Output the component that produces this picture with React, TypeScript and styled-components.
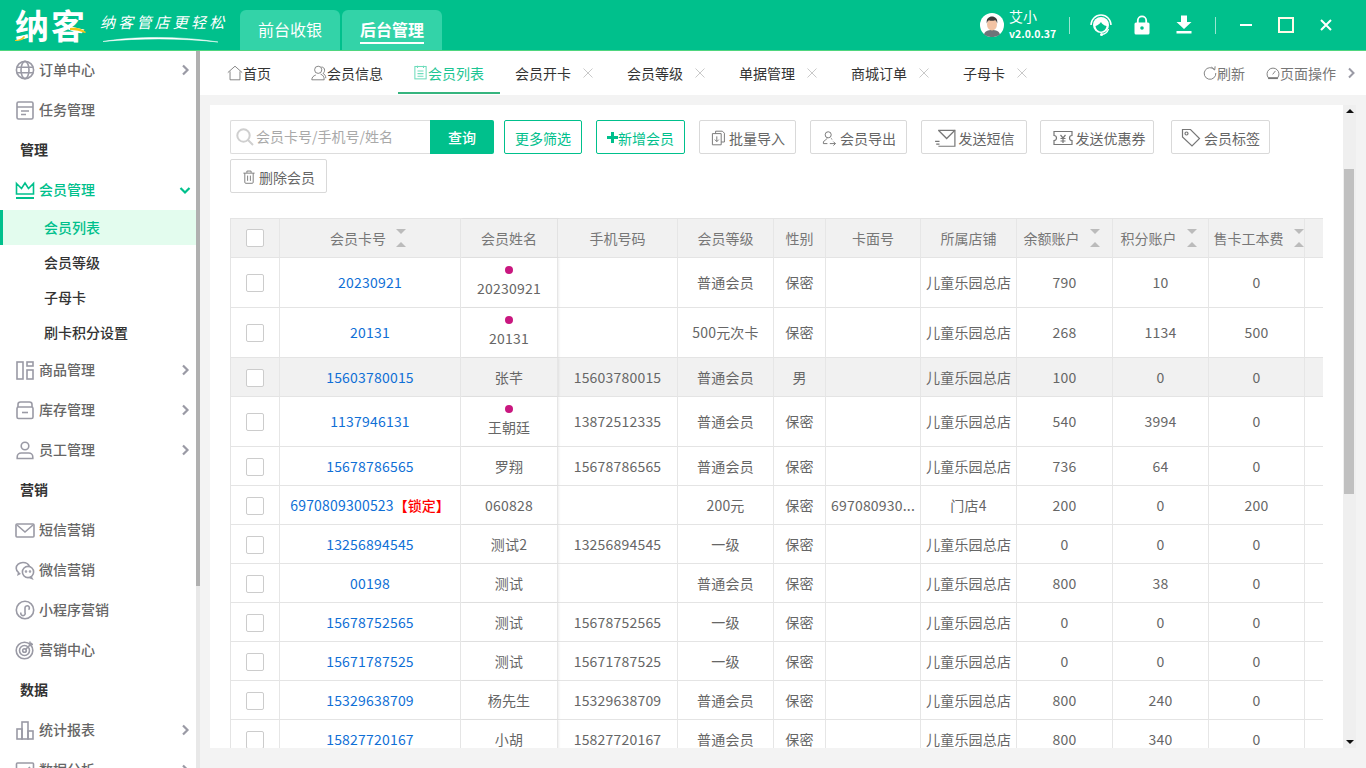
import React from "react";
import styled, { createGlobalStyle } from "styled-components";

const Global = createGlobalStyle`
  html, body { margin: 0; padding: 0; height: 100%; overflow: hidden; }
  body { font-family: "Noto Sans CJK SC", "Noto Sans", sans-serif; font-size: 14px; color: #333; }
  * { box-sizing: border-box; }
`;

const Shell = styled.div`width: 1366px; height: 768px; display: flex; flex-direction: column; overflow: hidden; background: #f3f3f3;`;

/* ---------- header ---------- */
const Header = styled.header`
  height: 50px; flex: none; background: #00c08c; box-shadow: 0 1px 0 #4fd67f; display: flex; align-items: flex-end;
  position: relative; z-index: 2; color: #fff;
`;
const Logo = styled.div`width: 100px; height: 50px; padding: 6px 0 0 15px; position: relative; flex: none;`;
const LogoText = styled.span`font-size: 34px; line-height: 38px; letter-spacing: 2px; font-weight: 700; color: #fff; display: block; white-space: nowrap;`;
const LogoAccent = styled.svg`position: absolute; left: 0; top: 0;`;
const Slogan = styled.div`width: 140px; height: 50px; flex: none; padding-top: 12px;`;
const SloganText = styled.span`display: block; font-size: 15px; line-height: 20px; font-style: italic; font-weight: 400; letter-spacing: 3.2px; white-space: nowrap;`;
const Swoosh = styled.svg`display: block; margin-top: 3px;`;
const TopTabs = styled.nav`display: flex; gap: 2px; flex: none;`;
const TopTab = styled.div<{ $on?: boolean }>`
  width: 100px; height: 40px; background: #33d3a8; border-radius: 6px 6px 0 0; display: flex; align-items: center; justify-content: center;
  font-size: 16px; font-weight: ${(p) => (p.$on ? 700 : 400)};
`;
const TopTabLabel = styled.span<{ $on?: boolean }>`
  line-height: 24px; padding-bottom: 1px; margin-top: 1px; border-bottom: 2px solid ${(p) => (p.$on ? "#fff" : "transparent")};
`;
const HeaderRight = styled.div`margin-left: auto; height: 50px; display: flex; align-items: center; flex: none; padding-right: 10px;`;
const Avatar = styled.svg`display: block; margin-right: 5px;`;
const UserBox = styled.div`width: 60px; display: flex; flex-direction: column;`;
const UserName = styled.span`font-size: 14px; line-height: 18px; margin-top: -2px;`;
const Version = styled.span`font-size: 10.5px; line-height: 14px; margin-top: 2px; font-weight: 700;`;
const VLine = styled.i`display: block; width: 1px; height: 17px; background: rgba(255,255,255,.6);`;
const HeadBtn = styled.div<{ $w: number }>`width: ${(p) => p.$w}px; height: 24px; display: flex; align-items: center; justify-content: center;`;

/* ---------- body ---------- */
const Body = styled.div`flex: 1; min-height: 0; display: flex;`;
const SideWrap = styled.aside`width: 200px; flex: none; display: flex; background: #fff;`;
const SideNav = styled.nav`width: 196px; overflow: hidden; background: #fff;`;
const SideBar = styled.div`width: 4px; background: #e8e8e8;`;
const SideThumb = styled.div`width: 4px; height: 536px; background: #b0b0b0;`;
const NavRow = styled.div<{ $on?: boolean }>`
  height: 40px; display: flex; align-items: center; padding: 0 5px 0 15px; color: ${(p) => (p.$on ? "#00c08c" : "#666")}; font-weight: 500;
`;
const NavLabel = styled.span`margin: -2px 0 0 4px; flex: 1; line-height: 20px;`;
const NavGroup = styled.div`height: 40px; display: flex; align-items: center; padding: 0 0 2px 20px; font-weight: 700; color: #333; font-size: 14px;`;
const SubRow = styled.div<{ $on?: boolean }>`
  height: 35px; display: flex; align-items: center; padding: 0 0 2px ${(p) => (p.$on ? 41 : 44)}px; font-weight: 500;
  color: ${(p) => (p.$on ? "#00c08c" : "#333")}; background: ${(p) => (p.$on ? "#e3fcee" : "transparent")};
  border-left: ${(p) => (p.$on ? "3px solid #00c08c" : "0")};
`;

const Main = styled.main`flex: 1; min-width: 0; display: flex; flex-direction: column;`;
const TabStrip = styled.div`height: 45px; flex: none; background: #fff; display: flex; padding-left: 12px;`;
const Tab = styled.div<{ $on?: boolean; $first?: boolean; $closable?: boolean }>`
  height: 44px; display: flex; align-items: center; flex: none; white-space: nowrap;
  padding: 1px ${(p) => (p.$closable ? 19 : p.$on ? 16 : 15)}px 0 15px; margin-right: ${(p) => (p.$first ? 10 : 0)}px;
  color: ${(p) => (p.$on ? "#1cc593" : "#333")};
  box-shadow: ${(p) => (p.$on ? "inset 0 -2px 0 #35b47e" : "none")};
`;
const TabClose = styled.svg`margin-left: 12px; display: block;`;
const TabTools = styled.div`margin-left: auto; display: flex; align-items: center; color: #777; padding: 1px 9px 0 0;`;
const ToolItem = styled.span`display: flex; align-items: center; margin-right: 21px; white-space: nowrap;`;
const ToolChevron = styled.svg`display: block; margin-left: -12px;`;

const Content = styled.div`flex: 1; min-height: 0; display: flex; padding: 10px 10px 20px 10px;`;
const Panel = styled.section`flex: 1; min-width: 0; background: #fff; padding: 15px 20px 0; overflow: hidden;`;
const Track = styled.div`width: 13px; flex: none; background: #efefef; display: flex; flex-direction: column;`;
const TrackArrow = styled.div<{ $down?: boolean }>`
  height: 12px; flex: none; display: flex; align-items: center; justify-content: center;
  &::before { content: ""; border-left: 4px solid transparent; border-right: 4px solid transparent;
    ${(p) => (p.$down ? "border-top: 4px solid #111;" : "border-bottom: 4px solid #111;")} }
`;
const TrackThumb = styled.div`width: 10px; height: 325px; margin: 52px 0 0 1px; background: #c0c0c0;`;
const TrackFill = styled.div`flex: 1;`;

const Toolbar = styled.div`display: flex; flex-wrap: wrap; row-gap: 5px;`;
const SearchBox = styled.div`
  width: 200px; height: 34px; border: 1px solid #ddd; border-right: 0; border-radius: 2px 0 0 2px; display: flex; align-items: center; padding-left: 4px; color: #aaa;
`;
const SearchText = styled.span`margin: -2px 0 0 1px; font-size: 14px; color: #a9a9a9; white-space: nowrap;`;
const QueryBtn = styled.div`
  width: 64px; height: 34px; background: #00c08c; color: #fff; display: flex; align-items: center; justify-content: center; border-radius: 0 2px 2px 0; margin-right: 10px; font-weight: 500;
`;
const Btn = styled.div<{ $w: number; $green?: boolean; $gap?: number; $pl?: number }>`
  width: ${(p) => p.$w}px; height: 34px; margin-right: ${(p) => p.$gap ?? 14}px; display: flex; align-items: center; justify-content: center; white-space: nowrap;
  padding: 1px 0 0 ${(p) => p.$pl ?? 0}px;
  border: 1px solid ${(p) => (p.$green ? "#00c08c" : "#d9d9d9")}; border-radius: 2px; color: ${(p) => (p.$green ? "#00c08c" : "#666")}; font-size: 14px;
  svg { margin-right: 3px; }
`;

const Table = styled.table`margin-top: 25px; width: 1093px; table-layout: fixed; border-collapse: separate; border-spacing: 0; border-top: 1px solid #e4e4e4; border-left: 1px solid #e4e4e4;`;
const Th = styled.th`
  height: 39px; background: #f1f1f1; border-right: 1px solid #e6e6e6; border-bottom: 1px solid #e4e4e4; font-weight: 400; color: #777; font-size: 14px; padding: 0; white-space: nowrap; text-align: center;
  &:last-child { border-right: 0; }
`;
const ThStick = styled(Th)`box-shadow: 1px 0 2px rgba(0,0,0,.07); border-right-color: #e2e2e2;`;
const Sortable = styled.span<{ $dx: number }>`
  display: inline-flex; align-items: center; justify-content: center;
  margin-left: ${(p) => (p.$dx > 0 ? p.$dx * 2 : 0)}px; margin-right: ${(p) => (p.$dx < 0 ? -p.$dx * 2 : 0)}px;
`;
const Sort = styled.span`display: flex; flex-direction: column; gap: 8px; margin-left: 10px;`;
const Tri = styled.i<{ $up?: boolean }>`
  display: block; width: 0; height: 0; border-left: 5px solid transparent; border-right: 5px solid transparent;
  ${(p) => (p.$up ? "border-bottom: 5px solid #bbb;" : "border-top: 5px solid #bbb;")}
`;
const Tr = styled.tr<{ $hi?: boolean }>`background: ${(p) => (p.$hi ? "#f1f1f1" : "#fff")};`;
const Td = styled.td<{ $tall?: boolean }>`
  height: ${(p) => (p.$tall ? 50 : 39)}px; border-right: 1px solid #e6e6e6; border-bottom: 1px solid #e4e4e4; padding: 0 5px ${(p) => (p.$tall ? 2 : 0)}px; color: #666; text-align: center; font-size: 14px;
  letter-spacing: .2px; white-space: nowrap; overflow: hidden; line-height: 20px;
  &:last-child { border-right: 0; }
`;
const TdCheck = styled(Td)`padding: ${(p) => (p.$tall ? 0 : 2)}px 5px 0;`;
const TdStick = styled(Td)`box-shadow: 1px 0 2px rgba(0,0,0,.07); overflow: visible;`;
const Check = styled.span`display: block; width: 18px; height: 18px; margin: 0 auto; background: #fff; border: 1px solid #ccc; border-radius: 2px;`;
const CardLink = styled.span`color: #0f6fd6;`;
const Locked = styled.span`color: #f00; font-size: 14px; letter-spacing: 0; font-weight: 500;`;
const Dot = styled.i`display: block; width: 8px; height: 8px; border-radius: 50%; background: #c9177f; margin: 0 auto 4px;`;

/* ---------- icons ---------- */
const G = "#9a9aa5";
const Ico = ({ children, s = 20, c = G, w = 1.6 }: { children: React.ReactNode; s?: number; c?: string; w?: number }) => (
  <svg width={s} height={s} viewBox="0 0 20 20" fill="none" stroke={c} strokeWidth={w} style={{ flex: "none", display: "block" }}>{children}</svg>
);
const Globe = () => <Ico><circle cx="10" cy="10" r="8.6" /><ellipse cx="10" cy="10" rx="4" ry="8.6" /><path d="M1.6 7.3h16.8M1.6 12.7h16.8" /></Ico>;
const Task = () => <Ico><rect x="2" y="2" width="16" height="17" rx="1.5" /><path d="M2 7h16M6 11h8M6 14.5h5" /></Ico>;
const Crown = () => <Ico c="#00c08c"><path d="M1.5 3.5l5 5 3.5-5.5 3.5 5.5 5-5V14h-17z" /><path d="M1 18h18" strokeWidth="2" /></Ico>;
const Product = () => <Ico><rect x="2" y="2" width="6" height="17" /><rect x="12" y="2" width="6" height="4" /><rect x="12" y="10" width="6" height="9" /></Ico>;
const Stock = () => <Ico><path d="M3 7V4.5A2.5 2.5 0 0 1 5.5 2h9A2.5 2.5 0 0 1 17 4.5V7" /><rect x="2" y="7" width="16" height="11.5" rx="1.5" /><path d="M7 12.5h6" /></Ico>;
const User = () => <Ico><circle cx="10" cy="6" r="3.8" /><path d="M2.2 18.5v-1.5c0-2.5 2-4 4-4h7.6c2 0 4 1.5 4 4v1.5z" /></Ico>;
const Mail = () => <Ico><rect x="1" y="4" width="18" height="13" rx="1" /><path d="M2 5l8 7 8-7" /></Ico>;
const Wechat = () => <Ico><path d="M8 2.5c-3.8 0-6.8 2.6-6.8 5.8 0 1.8 1 3.3 2.4 4.3l-.4 2 2.2-1.2" /><path d="M8 2.5c3 0 5.600 1.700 6.400 4" /><circle cx="13" cy="12" r="5.600" /><path d="M16 16.500l1 2-2.400-1" /><circle cx="11" cy="11.500" r=".5" /><circle cx="15" cy="11.500" r=".5" /></Ico>;
const Mini = () => <Ico><circle cx="10" cy="10" r="8.700" /><path d="M6 12.500a2.200 2.200 0 1 0 4 0V8a2.200 2.200 0 1 1 3.500 1.700" /></Ico>;
const Target = () => <Ico><circle cx="9.500" cy="10.500" r="8.300" /><circle cx="9.500" cy="10.500" r="5" /><circle cx="9.500" cy="10.500" r="1.800" /><path d="M10 10l7-7M15 1.500v3h3" /></Ico>;
const Bars = () => <Ico><rect x="2" y="9" width="5" height="10" /><rect x="7" y="2" width="6" height="17" /><rect x="13" y="11" width="5" height="8" /></Ico>;
const Analysis = () => <Ico><rect x="1.500" y="3" width="17" height="15" rx="1" /><path d="M5 13l3-4 3 2 4-4" /></Ico>;
const Chevron = ({ c = G, down }: { c?: string; down?: boolean }) => (
  <svg width="12" height="12" viewBox="0 0 12 12" fill="none" stroke={c} strokeWidth="2.200" style={{ flex: "none", display: "block" }}>
    <path d={down ? "M1.500 4l4.500 4.500L10.500 4" : "M4 1.500L8.500 6 4 10.500"} />
  </svg>
);
const T = "#777";
const THome = () => <Ico s={16} c={T} w={1.1}><path d="M1 9.500L10 1.500l9 8M3.800 8v10.500h12.400V8" /></Ico>;
const TUser = () => <Ico s={16} c={T} w={1.1}><circle cx="9" cy="6" r="4.500" /><path d="M1 18.500c0-3 2-5 5-6M12 11.500c3 1 4.500 3 4.500 7H1M13 2.500c2.500 0 4 1.800 4 4s-1 3-2 4c2 1 3.500 3 3.500 6" /></Ico>;
const TList = () => <Ico s={15} c="#6fdcbc" w={1.4}><rect x="2.500" y="2" width="15" height="16.500" /><path d="M6 1v3M14 1v3M6 8h8M6 11.500h8M6 15h8" /></Ico>;
const Refresh = () => <Ico s={14} c={T} w={1.300}><path d="M16.500 5.500A8.300 8.300 0 1 0 18.300 10" /><path d="M12 1.500l4.800 4 .5-5" /></Ico>;
const Gauge = () => <Ico s={14} c={T} w={1.300}><path d="M3.500 17a8.500 8.500 0 1 1 13 0z" /><path d="M9.500 12l4-5" /><path d="M3 17.500h14" strokeWidth="2.400" /></Ico>;
const Close = () => (
  <TabClose width="10" height="10" viewBox="0 0 10 10" fill="none" stroke="#c9c9c9" strokeWidth="1"><path d="M.5.500l9 9M9.500.500l-9 9" /></TabClose>
);
const Search = () => <Ico s={20} c="#cfcfcf" w={2}><circle cx="8.500" cy="8.500" r="6.200" /><path d="M13 13l5 5" /></Ico>;
const B = "#777";
const BImport = () => <Ico s={16} c={B} w={1.200}><path d="M7 4V1.500h8.500L18 4v11h-4" /><path d="M3 4.500h11v14H3z" /><path d="M8.500 8v6.500M6 12l2.500 2.500L11 12" /></Ico>;
const BExport = () => <Ico s={16} c={B} w={1.200}><circle cx="9" cy="6" r="3.800" /><path d="M7.500 10.500c-.5 2-3.500 2-4.500 4.500v2h5M13 10.500c0 1 1 1.500 1 1.500M11 17h7M15.500 14.500L18 17l-2.500 2.500" /></Ico>;
const BMail = () => <Ico s={22} c={B} w={1.100}><path d="M4 3h15v14.500H4" /><path d="M4 3l7.500 7.500L19 3" /><path d="M1 13h4M2 15.500h3" /></Ico>;
const BTicket = () => <Ico s={20} c={B} w={1.200}><path d="M1 3.500h18v4a2.500 2.500 0 0 0 0 5v4H1v-4a2.500 2.500 0 0 0 0-5z" /><path d="M7.500 7L10 10l2.500-3M7.500 10.500h5M7.500 13h5M10 10v5" /></Ico>;
const BTag = () => <Ico s={20} c={B} w={1.200}><path d="M1.500 1.500h8l9 9-7.500 7.500-9.500-9z" /><circle cx="5.500" cy="5.500" r="1.500" /></Ico>;
const BTrash = () => <Ico s={14} c={B} w={1.300}><path d="M4 4.500v13a1.500 1.500 0 0 0 1.500 1.500h9a1.500 1.500 0 0 0 1.500-1.500v-13M2 4.500h16M7 4V1.500h6V4M8 8v7.500M12 8v7.500" /></Ico>;

const AvatarIcon = () => (
  <Avatar width="24" height="24" viewBox="0 0 24 24">
    <circle cx="12" cy="12" r="12" fill="#fff" />
    <path d="M4 21.500c1-3.500 4-4.500 8-4.500s7 1 8 4.500A12 12 0 0 1 12 24a12 12 0 0 1-8-2.500z" fill="#6f7479" />
    <ellipse cx="12" cy="11.500" rx="5" ry="6" fill="#f2c3a4" />
    <path d="M6.800 10.500C6 5.500 9 3.500 12 3.500s6 2 5.200 7c-.5-2-1.200-3-2.200-3.300-2 .8-4.500.8-6 0-1 .4-1.700 1.300-2.200 3.300z" fill="#3d3a3a" />
  </Avatar>
);
const Headset = () => (
  <svg width="22" height="24" viewBox="0 0 22 24" fill="none" style={{ display: "block" }}>
    <path d="M1 12A10 10 0 0 1 21 12" stroke="#fff" strokeWidth="1.500" />
    <circle cx="11" cy="12" r="8" fill="#fff" />
    <path d="M5.500 13c2-.5 4-2 5.500-4 1 2 3 3.500 5.500 4-.3 3-2.700 5.500-5.500 5.500S5.800 16 5.500 13z" fill="#00c08c" />
    <path d="M18.500 16c-1 3-3.500 5-6.500 5.500" stroke="#fff" strokeWidth="1.300" />
    <circle cx="11.500" cy="21.500" r="1.500" fill="#fff" />
  </svg>
);
const LockIcon = () => (
  <svg width="16" height="20" viewBox="0 0 16 20" fill="none" style={{ display: "block" }}>
    <path d="M3.800 9V5.500a4.200 4.200 0 0 1 8.400 0V9" stroke="#fff" strokeWidth="1.800" />
    <rect x="0.500" y="7.500" width="15" height="12" rx="1.500" fill="#fff" />
    <circle cx="8" cy="13" r="1.800" fill="#00c08c" />
  </svg>
);
const DownIcon = () => (
  <svg width="16" height="20" viewBox="0 0 16 20" style={{ display: "block" }}>
    <path d="M5 0.500h6v6.500h4.500L8 14 0.500 7H5z" fill="#fff" />
    <rect x="0.500" y="16" width="15" height="2.500" fill="#fff" />
  </svg>
);

/* ---------- data ---------- */
type Row = { card: string; lock?: boolean; dot?: boolean; name: string; phone?: string; level: string; sex?: string; face?: string; store?: string; bal: string; pts: string; fee: string; hi?: boolean };
const rows: Row[] = [
  { card: "20230921", dot: true, name: "20230921", level: "普通会员", bal: "790", pts: "10", fee: "0" },
  { card: "20131", dot: true, name: "20131", level: "500元次卡", bal: "268", pts: "1134", fee: "500" },
  { card: "15603780015", name: "张芊", phone: "15603780015", level: "普通会员", sex: "男", bal: "100", pts: "0", fee: "0", hi: true },
  { card: "1137946131", dot: true, name: "王朝廷", phone: "13872512335", level: "普通会员", bal: "540", pts: "3994", fee: "0" },
  { card: "15678786565", name: "罗翔", phone: "15678786565", level: "普通会员", bal: "736", pts: "64", fee: "0" },
  { card: "6970809300523", lock: true, name: "060828", level: "200元", face: "697080930...", store: "门店4", bal: "200", pts: "0", fee: "200" },
  { card: "13256894545", name: "测试2", phone: "13256894545", level: "一级", bal: "0", pts: "0", fee: "0" },
  { card: "00198", name: "测试", level: "普通会员", bal: "800", pts: "38", fee: "0" },
  { card: "15678752565", name: "测试", phone: "15678752565", level: "一级", bal: "0", pts: "0", fee: "0" },
  { card: "15671787525", name: "测试", phone: "15671787525", level: "一级", bal: "0", pts: "0", fee: "0" },
  { card: "15329638709", name: "杨先生", phone: "15329638709", level: "普通会员", bal: "800", pts: "240", fee: "0" },
  { card: "15827720167", name: "小胡", phone: "15827720167", level: "普通会员", bal: "800", pts: "340", fee: "0" },
];
const cols = [49, 181, 97, 120, 96, 52, 95, 96, 96, 96, 96, 18];

const NavItem = ({ icon, label, arrow }: { icon: React.ReactNode; label: string; arrow?: boolean }) => (
  <NavRow>{icon}<NavLabel>{label}</NavLabel>{arrow && <Chevron />}</NavRow>
);
const SortHead = ({ label, dx }: { label: string; dx: number }) => (
  <Th><Sortable $dx={dx}>{label}<Sort><Tri /><Tri $up /></Sort></Sortable></Th>
);

export default function App() {
  return (
    <Shell>
      <Global />
      <Header>
        <Logo>
          <LogoText>纳客</LogoText>
          <LogoAccent width="100" height="50" viewBox="0 0 100 50">
            <path d="M15 40c3 0 6-1 9-4l1 1c-2 3-5 4-10 4z" fill="#f5c518" />
            <path d="M70 28c6-1 11 0 16 4l-1 1c-5-2-9-3-15-3z" fill="#f5c518" />
          </LogoAccent>
        </Logo>
        <Slogan>
          <SloganText>纳客管店更轻松</SloganText>
          <Swoosh width="120" height="8" viewBox="0 0 120 8">
            <path d="M3 6.500C35 1 80 1 118 7 80 3 40 3 3 6.500z" fill="#fff" stroke="#fff" strokeWidth=".5" />
          </Swoosh>
        </Slogan>
        <TopTabs>
          <TopTab><TopTabLabel>前台收银</TopTabLabel></TopTab>
          <TopTab $on><TopTabLabel $on>后台管理</TopTabLabel></TopTab>
        </TopTabs>
        <HeaderRight>
          <AvatarIcon />
          <UserBox>
            <UserName>艾小</UserName>
            <Version>v2.0.0.37</Version>
          </UserBox>
          <VLine />
          <HeadBtn $w={61}><Headset /></HeadBtn>
          <HeadBtn $w={22}><LockIcon /></HeadBtn>
          <HeadBtn $w={62}><DownIcon /></HeadBtn>
          <VLine />
          <HeadBtn $w={59}><svg width="12" height="12" viewBox="0 0 12 12" style={{ display: "block" }}><rect y="5" width="12" height="2" fill="#fff" /></svg></HeadBtn>
          <HeadBtn $w={21}><svg width="16" height="16" viewBox="0 0 16 16" fill="none" style={{ display: "block" }}><rect x="1" y="1" width="14" height="14" stroke="#fffbe8" strokeWidth="2" /></svg></HeadBtn>
          <HeadBtn $w={60}><svg width="14" height="14" viewBox="0 0 14 14" stroke="#fff" strokeWidth="2" style={{ display: "block" }}><path d="M2 2l10 10M12 2L2 12" /></svg></HeadBtn>
        </HeaderRight>
      </Header>
      <Body>
        <SideWrap>
          <SideNav>
            <NavItem icon={<Globe />} label="订单中心" arrow />
            <NavItem icon={<Task />} label="任务管理" />
            <NavGroup>管理</NavGroup>
            <NavRow $on><Crown /><NavLabel>会员管理</NavLabel><Chevron c="#00c08c" down /></NavRow>
            <SubRow $on>会员列表</SubRow>
            <SubRow>会员等级</SubRow>
            <SubRow>子母卡</SubRow>
            <SubRow>刷卡积分设置</SubRow>
            <NavItem icon={<Product />} label="商品管理" arrow />
            <NavItem icon={<Stock />} label="库存管理" arrow />
            <NavItem icon={<User />} label="员工管理" arrow />
            <NavGroup>营销</NavGroup>
            <NavItem icon={<Mail />} label="短信营销" />
            <NavItem icon={<Wechat />} label="微信营销" />
            <NavItem icon={<Mini />} label="小程序营销" />
            <NavItem icon={<Target />} label="营销中心" />
            <NavGroup>数据</NavGroup>
            <NavItem icon={<Bars />} label="统计报表" arrow />
            <NavItem icon={<Analysis />} label="数据分析" arrow />
          </SideNav>
          <SideBar><SideThumb /></SideBar>
        </SideWrap>
        <Main>
          <TabStrip>
            <Tab $first><THome />首页</Tab>
            <Tab><TUser />会员信息</Tab>
            <Tab $on><TList />会员列表</Tab>
            <Tab $closable>会员开卡<Close /></Tab>
            <Tab $closable>会员等级<Close /></Tab>
            <Tab $closable>单据管理<Close /></Tab>
            <Tab $closable>商城订单<Close /></Tab>
            <Tab $closable>子母卡<Close /></Tab>
            <TabTools>
              <ToolItem><Refresh />刷新</ToolItem>
              <ToolItem><Gauge />页面操作</ToolItem>
              <ToolChevron width="12" height="12" viewBox="0 0 12 12" fill="none" stroke={G} strokeWidth="2"><path d="M4 1.500L8.500 6 4 10.500" /></ToolChevron>
            </TabTools>
          </TabStrip>
          <Content>
            <Panel>
              <Toolbar>
                <SearchBox><Search /><SearchText>会员卡号/手机号/姓名</SearchText></SearchBox>
                <QueryBtn>查询</QueryBtn>
                <Btn $w={78} $green>更多筛选</Btn>
                <Btn $w={89} $green><svg width="11" height="11" viewBox="0 0 11 11" style={{ marginRight: 0 }}><path d="M4 0h3v4h4v3H7v4H4V7H0V4h4z" fill="#00c08c" /></svg>新增会员</Btn>
                <Btn $w={97}><BImport />批量导入</Btn>
                <Btn $w={97}><BExport />会员导出</Btn>
                <Btn $w={106} $gap={13}><BMail />发送短信</Btn>
                <Btn $w={114} $gap={17} $pl={4}><BTicket />发送优惠券</Btn>
                <Btn $w={99}><BTag />会员标签</Btn>
                <Btn $w={97}><BTrash />删除会员</Btn>
              </Toolbar>
              <Table>
                <colgroup>{cols.map((w, i) => <col key={i} style={{ width: w }} />)}</colgroup>
                <thead>
                  <tr>
                    <Th><Check /></Th>
                    <SortHead label="会员卡号" dx={-2} />
                    <ThStick>会员姓名</ThStick>
                    <Th>手机号码</Th>
                    <Th>会员等级</Th>
                    <Th>性别</Th>
                    <Th>卡面号</Th>
                    <Th>所属店铺</Th>
                    <SortHead label="余额账户" dx={-3} />
                    <SortHead label="积分账户" dx={-2} />
                    <SortHead label="售卡工本费" dx={2} />
                    <Th />
                  </tr>
                </thead>
                <tbody>
                  {rows.map((r) => {
                    const tall = !!r.dot;
                    return (
                      <Tr key={r.card} $hi={r.hi}>
                        <TdCheck $tall={tall}><Check /></TdCheck>
                        <Td $tall={tall}><CardLink>{r.card}</CardLink>{r.lock && <Locked>【锁定】</Locked>}</Td>
                        <TdStick $tall={tall}>{r.dot && <Dot />}{r.name}</TdStick>
                        <Td $tall={tall}>{r.phone}</Td>
                        <Td $tall={tall}>{r.level}</Td>
                        <Td $tall={tall}>{r.sex ?? "保密"}</Td>
                        <Td $tall={tall}>{r.face}</Td>
                        <Td $tall={tall}>{r.store ?? "儿童乐园总店"}</Td>
                        <Td $tall={tall}>{r.bal}</Td>
                        <Td $tall={tall}>{r.pts}</Td>
                        <Td $tall={tall}>{r.fee}</Td>
                        <Td $tall={tall} />
                      </Tr>
                    );
                  })}
                </tbody>
              </Table>
            </Panel>
            <Track>
              <TrackArrow />
              <TrackThumb />
              <TrackFill />
              <TrackArrow $down />
            </Track>
          </Content>
        </Main>
      </Body>
    </Shell>
  );
}
